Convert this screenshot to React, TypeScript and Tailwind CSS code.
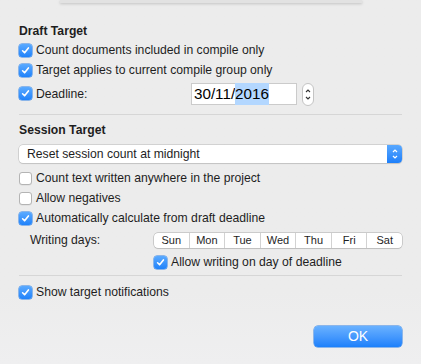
import { ReactNode } from "react";

const Check = ({ on }: { on: boolean }) =>
  on ? (
    <span className="w-[13px] h-[13px] rounded-[3px] bg-gradient-to-b from-[#5aaaff] to-[#1e82fa] flex items-center justify-center shrink-0 shadow-[0_0_0_0.5px_#2b7fe6]">
      <svg width="9" height="9" viewBox="0 0 9 9">
        <path d="M1.6 4.8 L3.6 6.8 L7.4 1.9" fill="none" stroke="white" strokeWidth="1.6" strokeLinecap="round" strokeLinejoin="round" />
      </svg>
    </span>
  ) : (
    <span className="w-[13px] h-[13px] rounded-[3px] bg-white border border-[#b4b4b4] shrink-0 shadow-[0_0.5px_0.5px_rgba(0,0,0,0.08)]" />
  );

const Row = ({ on, children, h = "h-[20px]" }: { on: boolean; children: ReactNode; h?: string }) => (
  <div className={`flex items-center gap-[4px] ${h}`}>
    <Check on={on} />
    <span>{children}</span>
  </div>
);

const days = ["Sun", "Mon", "Tue", "Wed", "Thu", "Fri", "Sat"];

export default function App() {
  return (
    <div className="w-[421px] h-[364px] bg-gradient-to-b from-[#ececec] from-80% to-[#efeff0] text-[12.2px] text-[#1e1e1e] font-['Liberation_Sans',sans-serif] overflow-hidden">
      <div className="ml-[60px] w-[302px] h-[3px] bg-[#e2e2e2] shadow-[0_1px_3px_rgba(0,0,0,0.18)]" />
      <div className="px-[19px] flex flex-col">
        <div className="mt-[19px] h-[18px] flex items-center font-bold">Draft Target</div>
        <Row on>Count documents included in compile only</Row>
        <Row on>Target applies to current compile group only</Row>
        <div className="flex items-center h-[28px]">
          <div className="flex items-center gap-[4px] w-[172px]">
            <Check on />
            <span>Deadline:</span>
          </div>
          <div className="w-[106px] h-[22px] bg-white border border-[#cbcbcb] flex items-center pl-[2px] text-[15.2px] text-black">
            <span>30/11/</span>
            <span className="bg-[#b3d7ff]">2016</span>
          </div>
          <div className="ml-[5px] w-[12px] h-[23px] rounded-[6px] bg-white border border-[#c4c4c4] flex flex-col items-center justify-center gap-[3px]">
            <svg width="6" height="4" viewBox="0 0 6 4">
              <path d="M1 3 L3 1 L5 3" fill="none" stroke="#333" strokeWidth="1.1" />
            </svg>
            <svg width="6" height="4" viewBox="0 0 6 4">
              <path d="M1 1 L3 3 L5 1" fill="none" stroke="#333" strokeWidth="1.1" />
            </svg>
          </div>
        </div>
        <div className="mt-[6px] h-px bg-[#d6d6d6]" />

        <div className="mt-[6px] h-[18px] flex items-center font-bold">Session Target</div>
        <div className="mt-[6px] h-[18px] flex items-stretch rounded-[4px] bg-white shadow-[0_0_0_0.5px_#b8b8b8,0_1px_1px_rgba(0,0,0,0.12)] overflow-hidden">
          <span className="flex-1 flex items-center pl-[8px]">Reset session count at midnight</span>
          <span className="w-[15px] bg-gradient-to-b from-[#58a8ff] to-[#1c7ffa] flex flex-col items-center justify-center gap-[2px]">
            <svg width="6" height="4" viewBox="0 0 6 4">
              <path d="M1 3 L3 1 L5 3" fill="none" stroke="white" strokeWidth="1.2" />
            </svg>
            <svg width="6" height="4" viewBox="0 0 6 4">
              <path d="M1 1 L3 3 L5 1" fill="none" stroke="white" strokeWidth="1.2" />
            </svg>
          </span>
        </div>
        <div className="mt-[5px]">
          <Row on={false}>Count text written anywhere in the project</Row>
          <Row on={false}>Allow negatives</Row>
          <Row on>Automatically calculate from draft deadline</Row>
        </div>
        <div className="mt-[2px] h-[20px] flex items-center">
          <span className="w-[135px] pl-[11px]">Writing days:</span>
          <div className="flex-1 h-[15px] flex rounded-[4px] bg-white shadow-[0_0_0_0.5px_#a9a9a9,0_1px_1px_rgba(0,0,0,0.1)] overflow-hidden text-[11px]">
            {days.map((d, i) => (
              <span
                key={d}
                className={`flex-1 flex items-center justify-center ${i > 0 ? "border-l border-[#d2d2d2]" : ""}`}
              >
                {d}
              </span>
            ))}
          </div>
        </div>
        <div className="mt-[2px] pl-[135px]">
          <Row on>Allow writing on day of deadline</Row>
        </div>
        <div className="mt-[3px] h-px bg-[#d6d6d6]" />
        <div className="mt-[6px]">
          <Row on>Show target notifications</Row>
        </div>
        <div className="mt-[24px] flex justify-end">
          <button className="w-[88px] h-[21px] rounded-[4px] bg-gradient-to-b from-[#69b1ff] to-[#1b80fb] text-white text-[14px] shadow-[0_0_0_0.5px_#2b7fe6]">
            OK
          </button>
        </div>
      </div>
    </div>
  );
}
